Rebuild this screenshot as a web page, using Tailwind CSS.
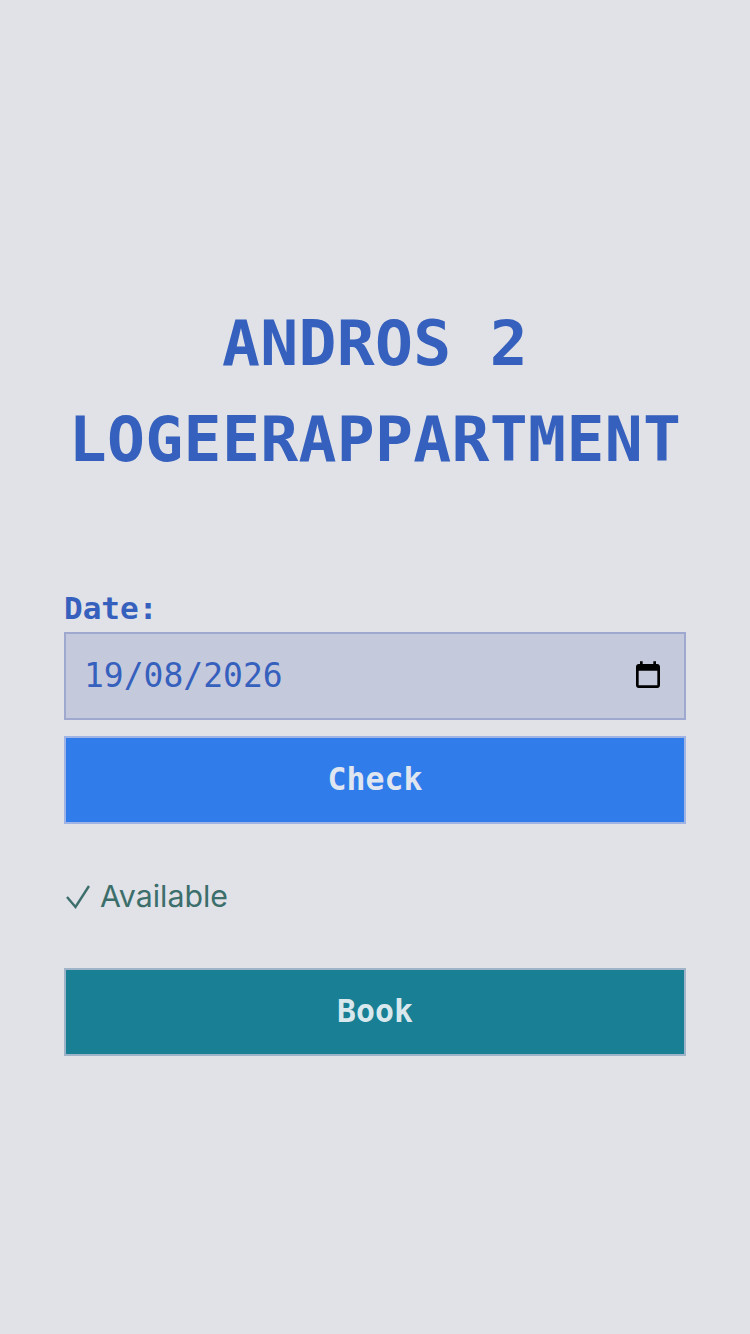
<!DOCTYPE html>
<html lang="en">
  <head>
    <meta charset="UTF-8" />
    <title>Andros 2</title>
    <script src="https://cdn.jsdelivr.net/npm/@tailwindcss/browser@4"></script>
  </head>
  <body class="bg-[#e0e2e7] font-['DejaVu_Sans_Mono',monospace]">
    <div class="w-[750px] h-[1334px] px-[64px] pt-[296px]">
      <!-- title -->
      <h1 class="text-center text-[63px] leading-[96px] font-bold tracking-[0.35px] text-[#3660bd] -mx-[20px]">ANDROS 2<br />LOGEERAPPARTMENT</h1>

      <form class="mt-[100px] flex flex-col">
        <label class="text-[31px] leading-[40px] font-bold text-[#3660bd]">Date:</label>
        <!-- date input -->
        <div class="mt-[4px] h-[88px] flex items-center justify-between pl-[18px] pr-[20px] bg-[#c5c9dc] border-2 border-[#9fa8cf]">
          <span class="text-[33px] text-[#3660bd]">19/08/2026</span>
          <svg class="w-[32px] h-[32px]" viewBox="0 0 24 24" fill="#000"><path d="M19 3h-1V1h-2v2H8V1H6v2H5c-1.1 0-2 .9-2 2v14c0 1.1.9 2 2 2h14c1.1 0 2-.9 2-2V5c0-1.1-.9-2-2-2zm0 16H5V8h14v11z"/></svg>
        </div>
        <button type="button" class="mt-[16px] h-[88px] bg-[#2f7cea] border-2 border-[#9fb4e4] text-[31.5px] font-semibold text-[#e0e6f0]">Check</button>
        <!-- result -->
        <div class="mt-[53px] h-[40px] flex items-center gap-[10px] font-['Inter',sans-serif] text-[30.3px] text-[#3c6e6b]">
          <svg class="w-[26px] h-[26px]" viewBox="0 0 26 26" fill="none" stroke="currentColor" stroke-width="2.4"><path d="M3 13l8.5 10L25 2"/></svg>
          <span>Available</span>
        </div>
        <button type="button" class="mt-[51px] h-[88px] bg-[#197f94] border-2 border-[#9fb4c9] text-[31.5px] font-semibold text-[#d8e8ec]">Book</button>
      </form>
    </div>
  </body>
</html>
